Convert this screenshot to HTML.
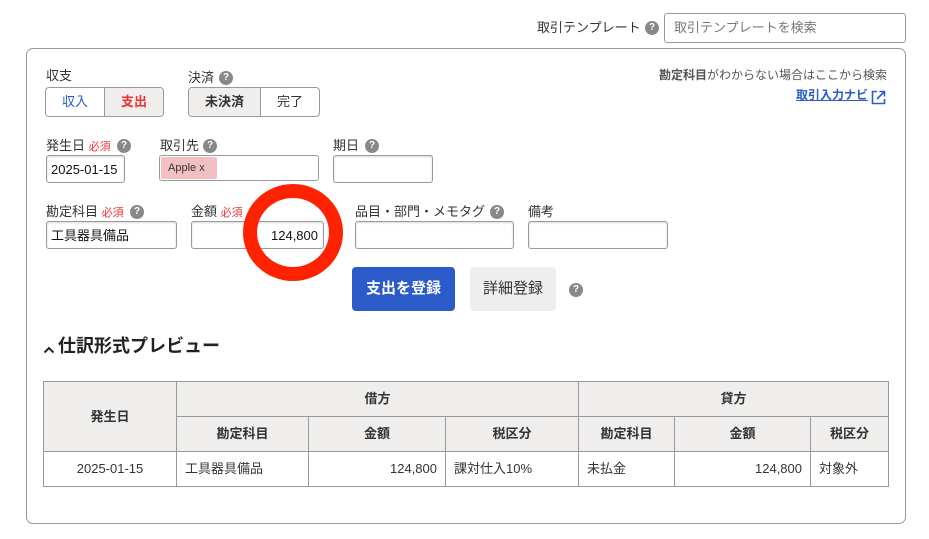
<!DOCTYPE html>
<html><head><meta charset="utf-8"><style>
*{box-sizing:border-box;margin:0;padding:0}
body{width:929px;height:539px;background:#fff;font-family:"Liberation Sans","Noto Sans CJK JP",sans-serif;color:#333;font-size:13px;line-height:1.2;position:relative;overflow:hidden}
.a{position:absolute;white-space:nowrap}
.q{position:absolute;width:14px;height:14px;border-radius:50%;background:#888;color:#fff;font-size:10px;font-weight:bold;text-align:center;line-height:14px}
.in{position:absolute;border:1px solid #999;border-radius:3px;background:#fff;box-shadow:inset 0 1px 2px rgba(0,0,0,.15)}
.req{color:#e33;font-size:11px}
table{position:absolute;left:43px;top:381px;border-collapse:collapse;font-size:13px}
td,th{border:1px solid #999;height:35px;padding:0 8px}
th{background:#efeeed;font-weight:bold;text-align:center}
</style></head><body>
<div class="a" style="left:537px;top:20px">取引テンプレート</div>
<div class="q" style="left:645px;top:21px">?</div>
<div class="in" style="left:664px;top:13px;width:242px;height:30px;box-shadow:none"><span class="a" style="left:9px;top:6px;color:#777">取引テンプレートを検索</span></div>

<div class="a" style="left:26px;top:48px;width:880px;height:476px;border:1px solid #999;border-radius:7px"></div>

<div class="a" style="left:46px;top:68px">収支</div>
<div class="a" style="left:45px;top:87px;width:119px;height:30px;border:1px solid #999;border-radius:4px;overflow:hidden;display:flex">
<div style="width:59px;text-align:center;line-height:28px;color:#2a5bc9;border-right:1px solid #999">収入</div>
<div style="flex:1;text-align:center;line-height:28px;color:#e33;background:#efeeed;font-weight:bold">支出</div></div>
<div class="a" style="left:188px;top:70px">決済</div>
<div class="q" style="left:219px;top:71px">?</div>
<div class="a" style="left:188px;top:87px;width:132px;height:30px;border:1px solid #999;border-radius:4px;overflow:hidden;display:flex">
<div style="width:72px;text-align:center;line-height:28px;background:#efeeed;font-weight:bold;border-right:1px solid #999">未決済</div>
<div style="flex:1;text-align:center;line-height:28px">完了</div></div>

<div class="a" style="right:42px;top:68px;font-size:12px;color:#555"><b>勘定科目</b>がわからない場合はここから検索</div>
<div class="a" style="left:796px;top:88px;font-size:12px;color:#2a5bc9;font-weight:bold;text-decoration:underline">取引入力ナビ</div>
<svg class="a" style="left:871px;top:90px" width="15" height="15" viewBox="0 0 15 15" fill="none" stroke="#2a5bc9" stroke-width="1.6"><path d="M6 1.5H1.5v12h12V9M8.5 1.5h5v5M13.5 1.5L6 9"/></svg>

<div class="a" style="left:46px;top:138px">発生日 <span class="req">必須</span></div>
<div class="q" style="left:117px;top:139px">?</div>
<div class="in" style="left:46px;top:155px;width:79px;height:28px"><span class="a" style="left:4px;top:6px;color:#111">2025-01-15</span></div>
<div class="a" style="left:160px;top:138px">取引先</div>
<div class="q" style="left:203px;top:139px">?</div>
<div class="in" style="left:159px;top:155px;width:160px;height:26px;box-shadow:none"><span class="a" style="left:1px;top:1px;width:56px;height:22px;background:#f2bfc3;border-radius:2px;font-size:11px;line-height:22px;padding-left:7px">Apple x</span></div>
<div class="a" style="left:333px;top:138px">期日</div>
<div class="q" style="left:365px;top:139px">?</div>
<div class="in" style="left:333px;top:155px;width:100px;height:28px"></div>

<div class="a" style="left:46px;top:204px">勘定科目 <span class="req">必須</span></div>
<div class="q" style="left:130px;top:205px">?</div>
<div class="in" style="left:46px;top:221px;width:131px;height:28px"><span class="a" style="left:4px;top:6px;color:#111">工具器具備品</span></div>
<div class="a" style="left:191px;top:204px">金額 <span class="req">必須</span></div>
<div class="in" style="left:191px;top:221px;width:133px;height:28px"><span class="a" style="right:5px;top:6px;color:#111">124,800</span></div>
<div class="a" style="left:355px;top:204px">品目・部門・メモタグ</div>
<div class="q" style="left:490px;top:205px">?</div>
<div class="in" style="left:355px;top:221px;width:159px;height:28px"></div>
<div class="a" style="left:528px;top:204px">備考</div>
<div class="in" style="left:528px;top:221px;width:140px;height:28px"></div>

<div class="a" style="left:243px;top:184px;width:100px;height:97px;border:14px solid #ff2200;border-radius:50%"></div>

<div class="a" style="left:352px;top:267px;width:103px;height:44px;background:#2a5bc9;border-radius:4px;color:#fff;font-weight:bold;font-size:15px;text-align:center;line-height:44px">支出を登録</div>
<div class="a" style="left:470px;top:267px;width:86px;height:44px;background:#efeeed;border-radius:4px;font-size:15px;text-align:center;line-height:44px">詳細登録</div>
<div class="q" style="left:569px;top:283px">?</div>

<svg class="a" style="left:43px;top:345px" width="12" height="9" viewBox="0 0 12 9" fill="none" stroke="#222" stroke-width="2"><path d="M1.5 7.5L6 3l4.5 4.5"/></svg>
<div class="a" style="left:58px;top:336px;font-size:18px;font-weight:bold;color:#222">仕訳形式プレビュー</div>

<table>
<tr><th rowspan="2" style="width:133px">発生日</th><th colspan="3">借方</th><th colspan="3">貸方</th></tr>
<tr><th style="width:132px">勘定科目</th><th style="width:137px">金額</th><th style="width:133px">税区分</th><th style="width:96px">勘定科目</th><th style="width:136px">金額</th><th style="width:78px">税区分</th></tr>
<tr><td style="text-align:center">2025-01-15</td><td>工具器具備品</td><td style="text-align:right">124,800</td><td>課対仕入10%</td><td>未払金</td><td style="text-align:right">124,800</td><td>対象外</td></tr>
</table>
</body></html>
